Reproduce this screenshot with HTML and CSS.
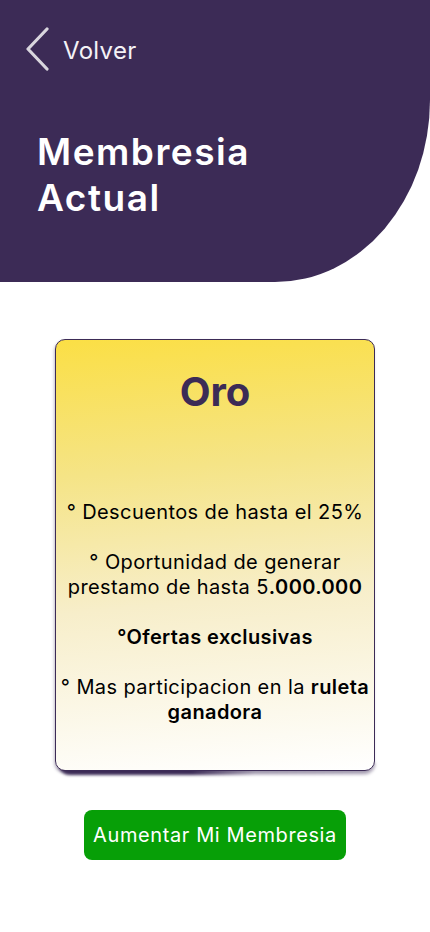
FILE: index.html
```html
<!DOCTYPE html>
<html lang="es">
<head>
<meta charset="utf-8">
<meta name="viewport" content="width=device-width, initial-scale=1">
<title>Membresia Actual</title>
<link rel="stylesheet" href="styles.css">
</head>
<body>
<header class="hero">
  <a class="back" href="#">
    <svg class="back-icon" width="26" height="46" viewBox="0 0 26 46" aria-hidden="true">
      <path d="M23 2 L4 22 L23 42" fill="none" stroke="#d9d6de" stroke-width="3.2" stroke-linecap="round" stroke-linejoin="round"/>
    </svg>
    <span class="back-text">Volver</span>
  </a>
  <h1 class="title">Membresia<br>Actual</h1>
</header>
<main class="content">
  <section class="card">
    <h2 class="tier">Oro</h2>
    <div class="benefits">
      <p>° Descuentos de hasta el 25%</p>
      <p>° Oportunidad de generar<br><span>prestamo de hasta 5</span><b>.000.000</b></p>
      <p><b>°Ofertas exclusivas</b></p>
      <p><span>° Mas participacion en la </span><b>ruleta</b><br><b>ganadora</b></p>
    </div>
  </section>
  <button class="cta" type="button">Aumentar Mi Membresia</button>
</main>
</body>
</html>
```
FILE: styles.css
```css
* { box-sizing: border-box; }
html, body { margin: 0; padding: 0; }
body {
  width: 430px;
  min-height: 932px;
  background: #ffffff;
  font-family: Inter, "Noto Sans", sans-serif;
  color: #000;
}
.hero {
  height: 282px;
  background: #3c2b56;
  border-bottom-right-radius: 155px 182px;
  padding: 27px 0 0 26px;
}
.back {
  display: flex;
  align-items: center;
  gap: 13px;
  text-decoration: none;
  color: #fff;
  height: 46px;
}
.back-icon { display: block; margin-left: -2px; }
.back-text {
  font-size: 24px;
  font-weight: 400;
  letter-spacing: 0.3px;
  color: #f4f2f6;
  margin-top: 1px;
}
.title {
  margin: 56px 0 0 11px;
  font-size: 37px;
  line-height: 46px;
  font-weight: 600;
  letter-spacing: 1.5px;
  color: #ffffff;
}
.content {
  display: flex;
  flex-direction: column;
  align-items: center;
  padding-top: 57px;
}
.card {
  position: relative;
  width: 320px;
  height: 432px;
  border: 1px solid #3c2b56;
  border-radius: 10px;
  background: linear-gradient(175deg, #fbdf45 0%, #f5e486 30%, #f7eeca 60%, #ffffff 100%);
  box-shadow: -1px 2px 3px rgba(60, 43, 86, 0.3);
  text-align: center;
  padding-top: 28px;
}
.card::before {
  content: "";
  position: absolute;
  left: 2px;
  right: -2px;
  bottom: -5px;
  height: 12px;
  border-radius: 0 0 12px 12px;
  background: linear-gradient(90deg, #3c2b56 0%, #3c2b56 42%, rgba(60, 43, 86, 0.3) 62%, rgba(60, 43, 86, 0.25) 100%);
  filter: blur(1.5px);
  z-index: -1;
}
.tier {
  margin: 0;
  font-size: 40px;
  line-height: 48px;
  font-weight: 700;
  color: #3c2b56;
}
.benefits {
  margin-top: 84px;
  padding: 0;
}
.benefits p {
  margin: 0 0 25px;
  font-size: 20px;
  line-height: 25px;
  letter-spacing: 0.4px;
  font-weight: 400;
}
.benefits b { font-weight: 600; }
.cta {
  margin-top: 39px;
  width: 262px;
  height: 50px;
  border: none;
  border-radius: 8px;
  background: #079f07;
  color: #ffffff;
  font-family: Inter, "Noto Sans", sans-serif;
  font-size: 20px;
  letter-spacing: 0.6px;
  font-weight: 400;
  padding: 0;
}
```
